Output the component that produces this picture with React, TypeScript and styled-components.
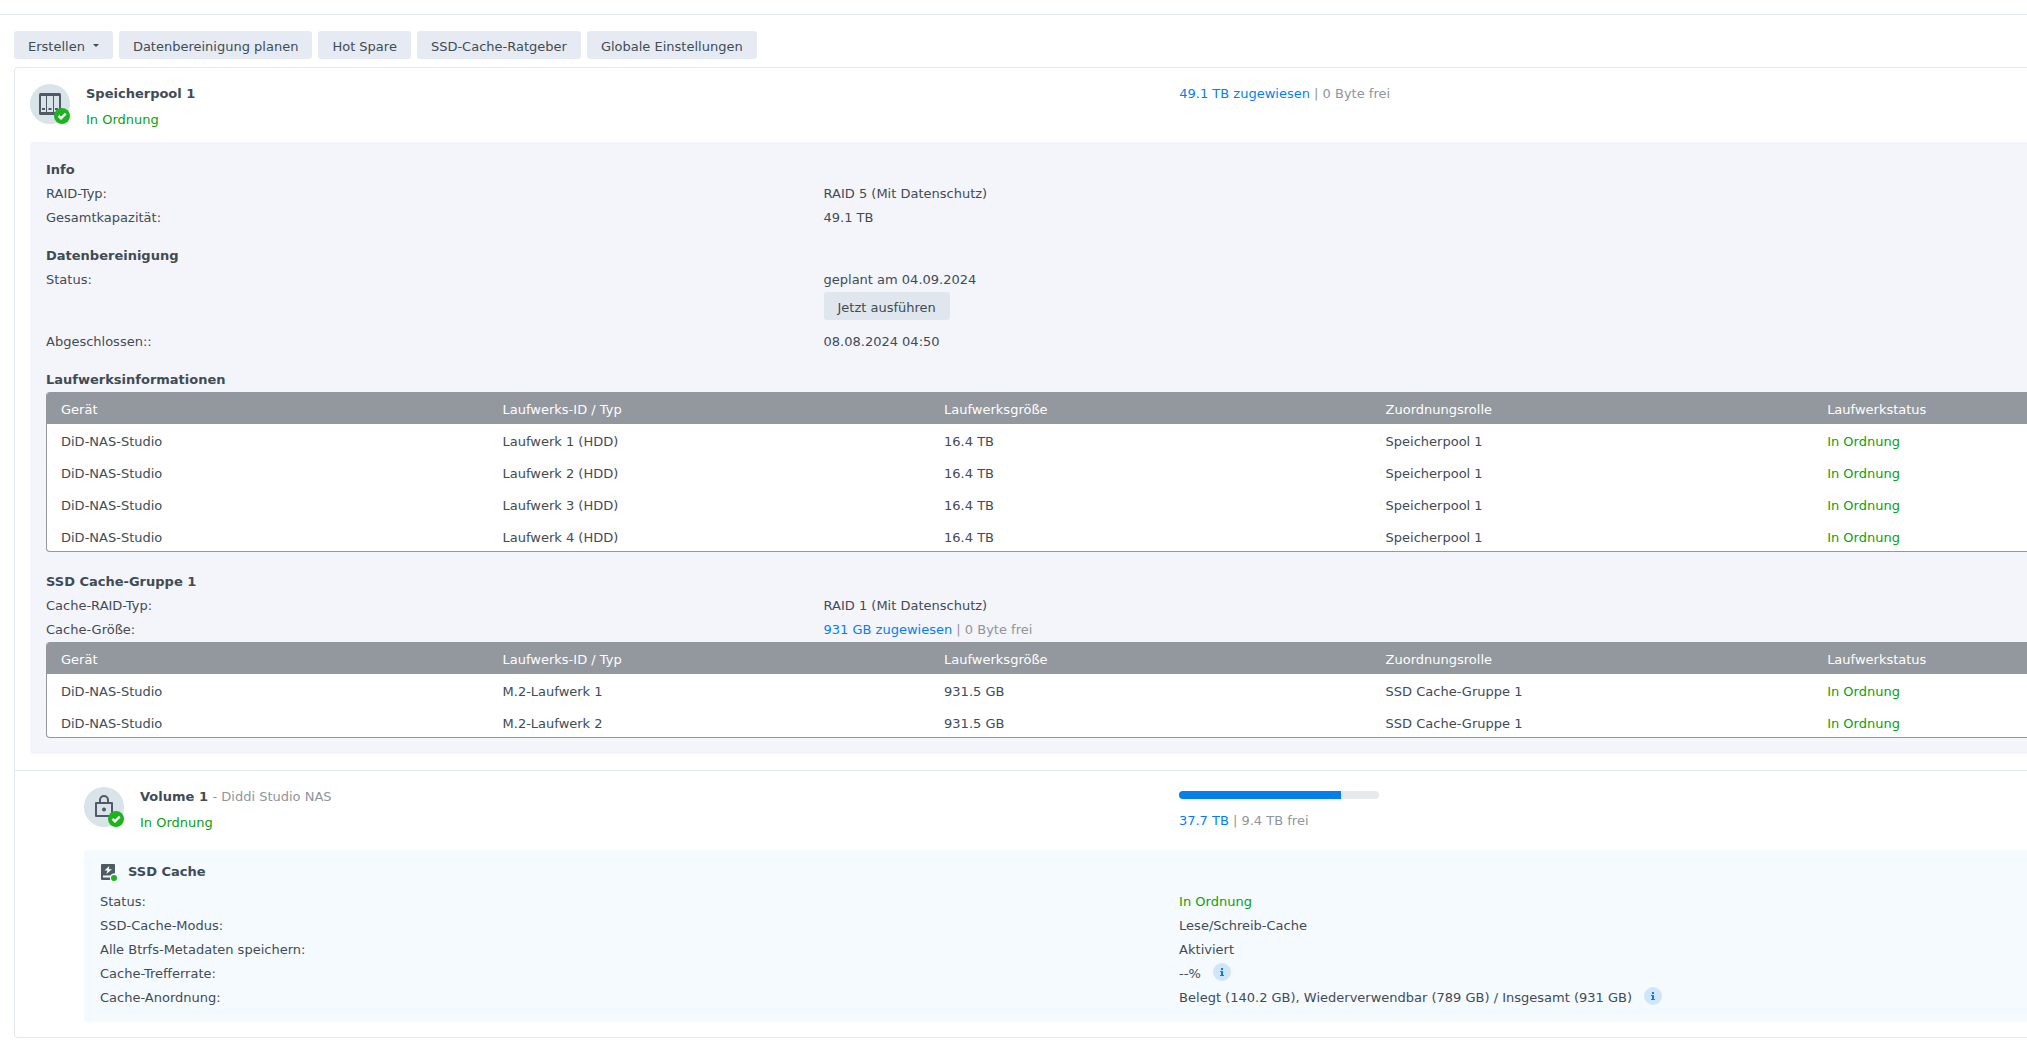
import React from "react";
import styled, { createGlobalStyle } from "styled-components";

const color = {
  text: "#414b55",
  muted: "#8f959b",
  blue: "#057feb",
  green: "#0a9f0e",
  badge: "#1db31d",
  line: "#e4e9ef",
  button: "#e6ebf3",
  panel: "#f4f5fa",
  cachePanel: "#f5faff",
  tableHead: "#93979e",
  avatar: "#d9e3ea",
  icon: "#505a65",
};

const GlobalStyle = createGlobalStyle`
  *, *::before, *::after { box-sizing: border-box; }
  body {
    margin: 0;
    background: #fff;
    color: ${color.text};
    font-family: Verdana, "DejaVu Sans", sans-serif;
    font-size: 13px;
    line-height: 24px;
    overflow-x: hidden;
  }
`;

const TopEdge = styled.div`
  height: 15px;
  border-bottom: 1px solid ${color.line};
`;

const Page = styled.main`
  padding: 16px 0 24px 14px;
`;

const Toolbar = styled.div`
  display: flex;
  flex-wrap: wrap;
  gap: 6px;
  margin-bottom: 8px;
`;

const Button = styled.button<{ $tone?: string }>`
  display: inline-flex;
  align-items: center;
  gap: 8px;
  height: 28px;
  padding: 4px 14px 0;
  border: 0;
  border-radius: 3px;
  background: ${(p) => p.$tone ?? color.button};
  color: inherit;
  font: inherit;
  white-space: nowrap;
  cursor: pointer;
`;

const Caret = styled.span`
  border: 3px solid transparent;
  border-top-color: ${color.text};
  border-bottom: 0;
  margin-bottom: 3px;
`;

const Card = styled.section`
  border: 1px solid ${color.line};
  border-right: 0;
  border-radius: 4px 0 0 4px;
`;

const Pool = styled.div`
  padding: 0 0 16px 15px;
  border-bottom: 1px solid ${color.line};
`;

const Volume = styled.div`
  padding: 0 0 15px 69px;
`;

const Header = styled.header<{ $columns: string; $bottom: number }>`
  display: grid;
  grid-template-columns: ${(p) => p.$columns};
  padding: 13px 0 ${(p) => p.$bottom}px;
  line-height: 26px;
`;

const Identity = styled.div`
  display: flex;
  align-items: flex-start;
  gap: 16px;
`;

const Avatar = styled.svg`
  width: 40px;
  height: 40px;
  margin-top: 3px;
`;

const Title = styled.h1`
  margin: 0;
  font-size: 13px;
  font-weight: 700;
`;

const Description = styled.span`
  font-weight: 400;
  color: ${color.muted};
`;

const Healthy = styled.span`
  color: ${color.green};
`;

const Allocated = styled.span`
  color: ${color.blue};
`;

const Free = styled.span`
  color: ${color.muted};
`;

const Track = styled.div`
  width: 200px;
  height: 8px;
  margin: 7px 0 9px;
  border-radius: 4px;
  background: #e6e8ea;
  overflow: hidden;
`;

const Fill = styled.div`
  height: 100%;
  background: ${color.blue};
`;

const PoolPanel = styled.div`
  display: grid;
  gap: 13px;
  padding: 15px 0 16px 16px;
  border-radius: 4px 0 0 4px;
  background: ${color.panel};
`;

const CachePanel = styled.div`
  padding: 9px 0 12px 16px;
  border-radius: 4px 0 0 4px;
  background: ${color.cachePanel};
`;

const DriveSection = styled.div`
  padding-bottom: 4px;
`;

const Heading = styled.h2`
  margin: 0;
  font-size: 13px;
  font-weight: 700;
  line-height: 25px;
`;

const CacheHeading = styled.div`
  display: flex;
  align-items: center;
  gap: 10px;
  margin-bottom: 6px;
`;

const Facts = styled.dl<{ $columns: string }>`
  display: grid;
  grid-template-columns: ${(p) => p.$columns};
  margin: 0;

  dt, dd { margin: 0; }
`;

const Action = styled.div`
  display: flex;
  padding-bottom: 10px;
`;

const TableFrame = styled.div`
  border: 1px solid ${color.tableHead};
  border-width: 0 0 1px 1px;
  border-radius: 4px 0 0 4px;
  background: #fff;
  overflow: hidden;
`;

const Table = styled.table`
  width: 100%;
  border-collapse: collapse;
  table-layout: fixed;

  th, td {
    height: 32px;
    padding: 6px 0 0 14px;
    text-align: left;
    vertical-align: top;
    font-weight: 400;
    white-space: nowrap;
  }
  tbody tr:last-child td { height: 31px; }
  thead th {
    background: ${color.tableHead};
    color: #fff;
  }
  th:not(:last-child) { width: 22.3%; }
`;

const InfoButton = styled.button`
  display: inline-grid;
  place-items: center;
  width: 18px;
  height: 18px;
  margin: 1px 0 0 12px;
  padding: 0;
  border: 0;
  border-radius: 50%;
  background: #cfe5fa;
  color: ${color.blue};
  vertical-align: top;
  cursor: pointer;
`;

const WithInfo = styled.dd`
  white-space: nowrap;
`;

const poolHeaderColumns = "57.55% 1fr";
const poolFactColumns = "39.25% 1fr";
const volumeHeaderColumns = "56.35% 1fr";
const cacheFactColumns = "56% 1fr";

function CheckBadge() {
  return (
    <>
      <circle cx="32" cy="32" r="8" fill={color.badge} />
      <path d="M28.5 31.800l2.500 2.500 4.700-4.700" fill="none" stroke="#fff" strokeWidth="2.4" />
    </>
  );
}

function PoolIcon() {
  return (
    <Avatar viewBox="0 0 40 40" aria-hidden="true">
      <circle cx="20" cy="20" r="20" fill={color.avatar} />
      <rect x="9" y="9" width="22" height="22" rx="1.5" fill={color.icon} />
      <path d="M11 12h5v16h-5zM17 12h6v16h-6zM24 12h5v16h-5z" fill={color.avatar} />
      <path d="M12 25h3M18.500 25h3M25 25h3" stroke={color.icon} strokeWidth="2" />
      <CheckBadge />
    </Avatar>
  );
}

function LockIcon() {
  return (
    <Avatar viewBox="0 0 40 40" aria-hidden="true">
      <circle cx="20" cy="20" r="20" fill={color.avatar} />
      <path d="M16 16v-3a4 4 0 0 1 8 0v3" fill="none" stroke={color.icon} strokeWidth="2" />
      <rect x="12" y="16" width="16" height="13" fill="none" stroke={color.icon} strokeWidth="2" strokeLinejoin="round" />
      <circle cx="20" cy="22.5" r="2" fill={color.icon} />
      <CheckBadge />
    </Avatar>
  );
}

function CacheIcon() {
  return (
    <svg width="18" height="18" viewBox="0 0 18 18" aria-hidden="true">
      <path
        d="M2 1h12a1 1 0 0 1 1 1v8.200c-2 0-3.600.800-4.600 2.300H3v2h7v2.500H2a1 1 0 0 1-1-1V2a1 1 0 0 1 1-1z"
        fill={color.icon}
      />
      <path d="M9.300 3L4.500 7.500h3L6.300 11 12 6.300H8.800z" fill="#fff" />
      <circle cx="14" cy="15" r="3" fill={color.badge} />
    </svg>
  );
}

function InfoHint({ label }: { label: string }) {
  return (
    <InfoButton type="button" aria-label={label}>
      <svg width="4" height="8" viewBox="0 0 4 8" aria-hidden="true">
        <path d="M1 0h2v2H1zM0 3h3v4h1v1H0V7h1V4H0z" fill="currentColor" />
      </svg>
    </InfoButton>
  );
}

type Drive = { id: string; size: string; role: string };

const poolDrives: Drive[] = [1, 2, 3, 4].map((n) => ({
  id: `Laufwerk ${n} (HDD)`,
  size: "16.4 TB",
  role: "Speicherpool 1",
}));

const cacheDrives: Drive[] = [1, 2].map((n) => ({
  id: `M.2-Laufwerk ${n}`,
  size: "931.5 GB",
  role: "SSD Cache-Gruppe 1",
}));

function DriveTable({ drives }: { drives: Drive[] }) {
  return (
    <TableFrame>
      <Table>
        <thead>
          <tr>
            <th scope="col">Gerät</th>
            <th scope="col">Laufwerks-ID / Typ</th>
            <th scope="col">Laufwerksgröße</th>
            <th scope="col">Zuordnungsrolle</th>
            <th scope="col">Laufwerkstatus</th>
          </tr>
        </thead>
        <tbody>
          {drives.map((drive) => (
            <tr key={drive.id}>
              <td>DiD-NAS-Studio</td>
              <td>{drive.id}</td>
              <td>{drive.size}</td>
              <td>{drive.role}</td>
              <td><Healthy>In Ordnung</Healthy></td>
            </tr>
          ))}
        </tbody>
      </Table>
    </TableFrame>
  );
}

export default function App() {
  return (
    <>
      <GlobalStyle />
      <TopEdge />
      <Page>
        <Toolbar>
          <Button type="button" aria-haspopup="menu">Erstellen <Caret /></Button>
          <Button type="button">Datenbereinigung planen</Button>
          <Button type="button">Hot Spare</Button>
          <Button type="button">SSD-Cache-Ratgeber</Button>
          <Button type="button">Globale Einstellungen</Button>
        </Toolbar>

        <Card>
          <Pool>
            <Header $columns={poolHeaderColumns} $bottom={9}>
              <Identity>
                <PoolIcon />
                <div>
                  <Title>Speicherpool 1</Title>
                  <Healthy>In Ordnung</Healthy>
                </div>
              </Identity>
              <div>
                <Allocated>49.1 TB zugewiesen</Allocated> <Free>| 0 Byte frei</Free>
              </div>
            </Header>

            <PoolPanel>
              <div>
                <Heading>Info</Heading>
                <Facts $columns={poolFactColumns}>
                  <dt>RAID-Typ:</dt>
                  <dd>RAID 5 (Mit Datenschutz)</dd>
                  <dt>Gesamtkapazität:</dt>
                  <dd>49.1 TB</dd>
                </Facts>
              </div>
              <div>
                <Heading>Datenbereinigung</Heading>
                <Facts $columns={poolFactColumns}>
                  <dt>Status:</dt>
                  <dd>
                    geplant am 04.09.2024
                    <Action>
                      <Button type="button" $tone="#dfe6ed">Jetzt ausführen</Button>
                    </Action>
                  </dd>
                  <dt>Abgeschlossen::</dt>
                  <dd>08.08.2024 04:50</dd>
                </Facts>
              </div>
              <DriveSection>
                <Heading>Laufwerksinformationen</Heading>
                <DriveTable drives={poolDrives} />
              </DriveSection>
              <div>
                <Heading>SSD Cache-Gruppe 1</Heading>
                <Facts $columns={poolFactColumns}>
                  <dt>Cache-RAID-Typ:</dt>
                  <dd>RAID 1 (Mit Datenschutz)</dd>
                  <dt>Cache-Größe:</dt>
                  <dd>
                    <Allocated>931 GB zugewiesen</Allocated> <Free>| 0 Byte frei</Free>
                  </dd>
                </Facts>
                <DriveTable drives={cacheDrives} />
              </div>
            </PoolPanel>
          </Pool>

          <Volume>
            <Header $columns={volumeHeaderColumns} $bottom={14}>
              <Identity>
                <LockIcon />
                <div>
                  <Title>Volume 1 <Description>- Diddi Studio NAS</Description></Title>
                  <Healthy>In Ordnung</Healthy>
                </div>
              </Identity>
              <div>
                <Track role="progressbar" aria-label="Belegter Speicher" aria-valuenow={81} aria-valuemin={0} aria-valuemax={100}>
                  <Fill style={{ width: "81%" }} />
                </Track>
                <Allocated>37.7 TB</Allocated> <Free>| 9.4 TB frei</Free>
              </div>
            </Header>

            <CachePanel>
              <CacheHeading>
                <CacheIcon />
                <Heading>SSD Cache</Heading>
              </CacheHeading>
              <Facts $columns={cacheFactColumns}>
                <dt>Status:</dt>
                <dd><Healthy>In Ordnung</Healthy></dd>
                <dt>SSD-Cache-Modus:</dt>
                <dd>Lese/Schreib-Cache</dd>
                <dt>Alle Btrfs-Metadaten speichern:</dt>
                <dd>Aktiviert</dd>
                <dt>Cache-Trefferrate:</dt>
                <WithInfo>--%<InfoHint label="Cache-Trefferrate" /></WithInfo>
                <dt>Cache-Anordnung:</dt>
                <WithInfo>
                  Belegt (140.2 GB), Wiederverwendbar (789 GB) / Insgesamt (931 GB)
                  <InfoHint label="Cache-Anordnung" />
                </WithInfo>
              </Facts>
            </CachePanel>
          </Volume>
        </Card>
      </Page>
    </>
  );
}
